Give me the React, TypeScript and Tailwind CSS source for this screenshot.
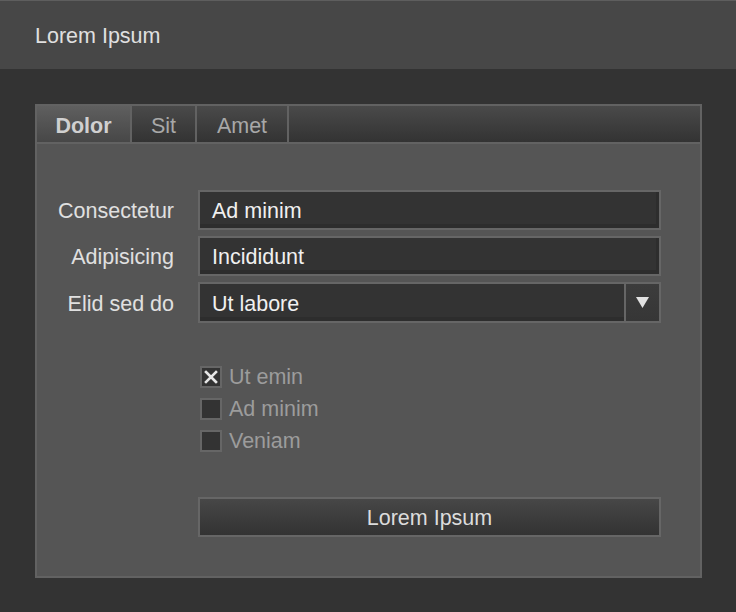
import { useState } from "react";

const font = { fontFamily: '"Liberation Sans", Arial, Helvetica, sans-serif' };

const tabs = ["Dolor", "Sit", "Amet"];

const fields = [
  { label: "Consectetur", value: "Ad minim" },
  { label: "Adipisicing", value: "Incididunt" },
];

const options = [
  { label: "Ut emin", checked: true },
  { label: "Ad minim", checked: false },
  { label: "Veniam", checked: false },
];

function Check({ checked }: { checked: boolean }) {
  return (
    <span className="flex h-[22px] w-[22px] items-center justify-center border-2 border-[#666] bg-[#333]">
      {checked && (
        <svg width="14" height="14" viewBox="0 0 14 14">
          <path d="M2 2L12 12M12 2L2 12" stroke="#e6e6e6" strokeWidth="2.6" strokeLinecap="square" />
        </svg>
      )}
    </span>
  );
}

export default function App() {
  const [active, setActive] = useState(0);
  const [checks, setChecks] = useState(options.map((o) => o.checked));

  return (
    <div className="h-[612px] w-[736px] overflow-hidden bg-[#333]" style={font}>
      {/* Header */}
      <div className="flex h-[69px] items-center border-t border-[#5e5e5e] bg-[#474747] px-[35px] pt-[3px] text-[21.5px] text-[#e0e0e0]">
        Lorem Ipsum
      </div>

      <div className="px-[35px] pt-[35px]">
        <div className="h-[474px] w-[667px] border-2 border-[#626262] bg-[#555]">
          {/* Tabs */}
          <div className="flex h-[38px] border-b-2 border-[#626262] bg-gradient-to-b from-[#4a4a4a] to-[#333]">
            {tabs.map((t, i) => (
              <button
                key={t}
                onClick={() => setActive(i)}
                className={`flex h-full items-center justify-center border-r-2 border-[#626262] pt-[4px] text-[21.5px] ${
                  i === 0 ? "w-[95px]" : i === 1 ? "w-[65px]" : "w-[92px]"
                } ${
                  active === i
                    ? "bg-gradient-to-b from-[#5f5f5f] to-[#474747] font-bold text-[#d0d0d0]"
                    : "text-[#a8a8a8]"
                }`}
              >
                {t}
              </button>
            ))}
          </div>

          {/* Form */}
          <div className="pt-[46px]">
            <div className="grid grid-cols-[137px_463px] gap-x-[24px] gap-y-[6px]">
              {fields.map((f) => (
                <div key={f.label} className="contents">
                  <label className="flex items-center justify-end pt-[3px] text-[21.5px] text-[#e0e0e0]">
                    {f.label}
                  </label>
                  <div className="flex h-[40px] items-center border-2 border-[#666] bg-[#333] pl-[12px] pt-[3px] text-[21.5px] text-[#f0f0f0] shadow-[inset_-3px_-4px_0_#2d2d2d]">
                    {f.value}
                  </div>
                </div>
              ))}
              <label className="flex items-center justify-end pt-[3px] text-[21.5px] text-[#e0e0e0]">
                Elid sed do
              </label>
              <div className="flex h-[41px] border-2 border-[#666] bg-[#333]">
                <div className="flex flex-1 items-center pl-[12px] pt-[3px] text-[21.5px] text-[#f0f0f0] shadow-[inset_0_-4px_0_#2d2d2d]">
                  Ut labore
                </div>
                <div className="flex w-[35px] items-center justify-center border-l-2 border-[#666] bg-gradient-to-b from-[#3c3c3c] to-[#363636]">
                  <svg width="13" height="11" viewBox="0 0 13 11">
                    <path d="M0 0H13L6.5 11Z" fill="#e2e2e2" />
                  </svg>
                </div>
              </div>
            </div>

            {/* Checkboxes */}
            <div className="ml-[163px] mt-[43px] flex flex-col gap-[10px]">
              {options.map((o, i) => (
                <label
                  key={o.label}
                  className="flex h-[22px] cursor-pointer items-center gap-[7px] text-[21.5px] text-[#9c9c9c]"
                  onClick={() => setChecks((c) => c.map((v, j) => (j === i ? !v : v)))}
                >
                  <Check checked={checks[i]} />
                  <span className="pt-[1px]">{o.label}</span>
                </label>
              ))}
            </div>

            {/* Button */}
            <div className="ml-[161px] mt-[45px]">
              <button className="flex h-[40px] w-[463px] items-center justify-center border-2 border-[#666] bg-gradient-to-b from-[#474747] to-[#333] pt-[2px] text-[21.5px] text-[#dcdcdc]">
                Lorem Ipsum
              </button>
            </div>
          </div>
        </div>
      </div>
    </div>
  );
}
